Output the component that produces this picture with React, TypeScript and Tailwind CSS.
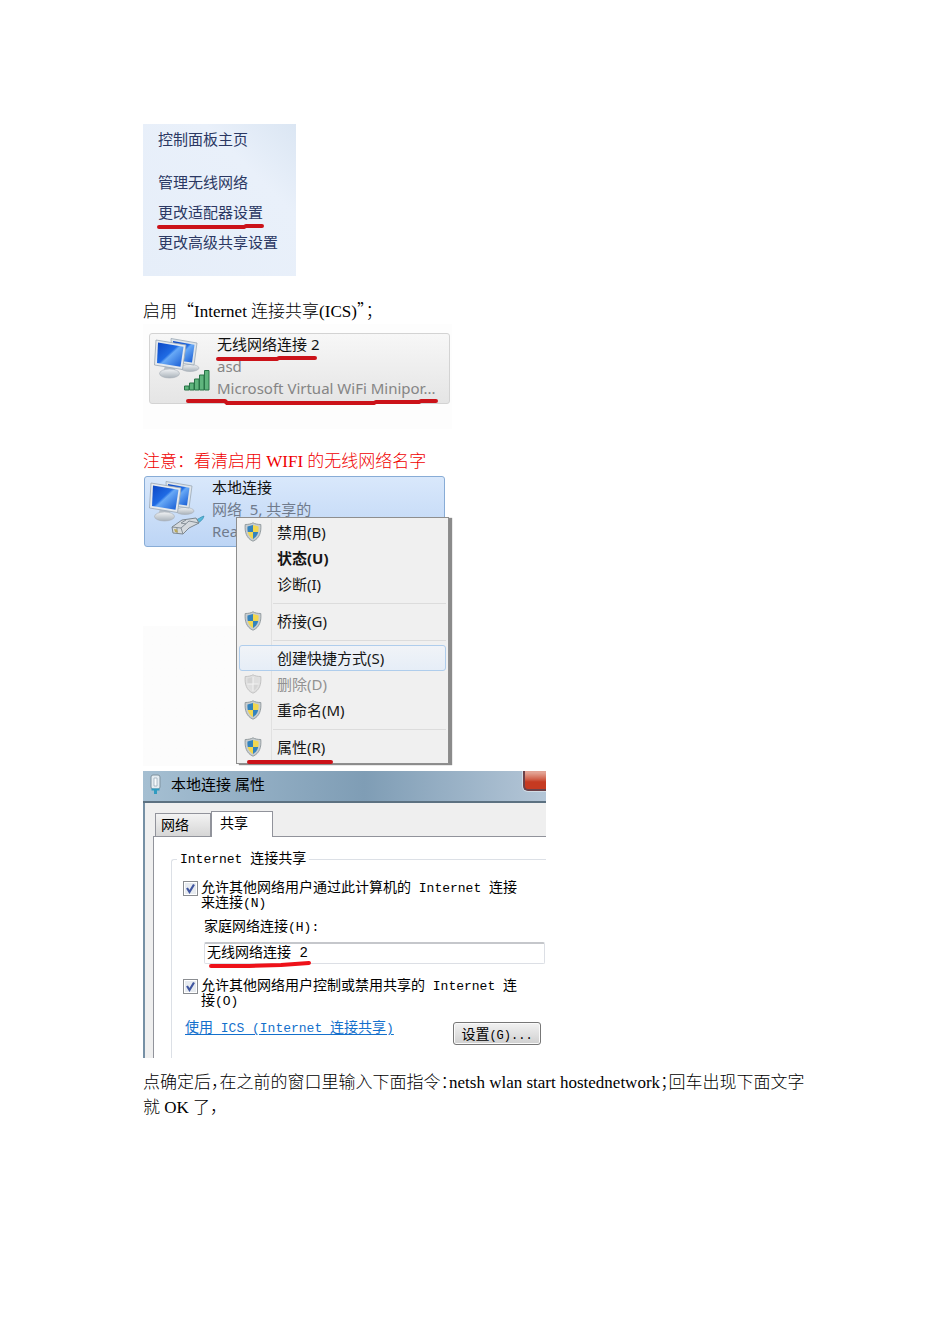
import React, { useId, useState } from "react";

const UI_FONT = "font-['Noto_Sans','Noto_Sans_CJK_SC',sans-serif]";
const SONG_FONT = "font-['Liberation_Mono','Noto_Sans_CJK_SC',monospace]";

function Latin({ children }: { children: React.ReactNode }) {
  return <span className="text-[13px]">{children}</span>;
}

function Cjk({ children }: { children: React.ReactNode }) {
  return <span className="font-['Noto_Sans_CJK_SC',sans-serif]">{children}</span>;
}

function Marker({ points, className, width = 3, color = "#cb1219" }: { points: string; className: string; width?: number; color?: string }) {
  return (
    <svg className={`pointer-events-none absolute overflow-visible ${className}`} width="10" height="10" aria-hidden="true">
      <polyline points={points} fill="none" stroke={color} strokeWidth={width} strokeLinecap="round" strokeLinejoin="round" />
    </svg>
  );
}

function Monitors({ kind }: { kind: "wifi" | "cable" }) {
  const id = useId();
  return (
    <svg width="64" height="68" viewBox="0 0 64 68" className="-ml-[2px] -mt-[2px] shrink-0" aria-hidden="true">
      <defs>
        <linearGradient id={`${id}s`} x1="0" y1="0" x2="1" y2="1">
          <stop offset="0" stopColor="#0c46c4" />
          <stop offset="0.45" stopColor="#1f6be4" />
          <stop offset="0.52" stopColor="#68a9f6" />
          <stop offset="1" stopColor="#1257d2" />
        </linearGradient>
        <linearGradient id={`${id}g`} x1="0" y1="0" x2="0" y2="1">
          <stop offset="0" stopColor="#f1f3f5" />
          <stop offset="1" stopColor="#a9b2ba" />
        </linearGradient>
      </defs>
      <ellipse cx="42" cy="36" rx="9" ry="3.5" fill={`url(#${id}g)`} stroke="#a7afb7" strokeWidth=".6" />
      <path d="M23 6.5 49 11 46 33 24 30Z" fill="#dfe5ea" stroke="#9ba8b5" strokeWidth=".8" strokeLinejoin="round" />
      <path d="M25 9 46.500 12.700 44 30.500 26 28Z" fill={`url(#${id}s)`} />
      <path d="M17 34h9l2 6H15z" fill="#b8c0c8" />
      <ellipse cx="21.500" cy="41.500" rx="10" ry="4.500" fill={`url(#${id}g)`} stroke="#a7afb7" strokeWidth=".6" />
      <path d="M8 8 38 13 34.500 37.500 6.500 33Z" fill="#e6eaee" stroke="#99a6b3" strokeWidth=".8" strokeLinejoin="round" />
      <path d="M10 10.500 35.500 14.800 32.500 34.800 9 31Z" fill={`url(#${id}s)`} />
      {kind === "wifi" ? (
        <g fill="#5fb57d" stroke="#287347" strokeWidth="1">
          <path d="M36.500 54h4.500v4h-4.500zM41.500 51h4.500v7h-4.500zM46.500 47h4.500v11h-4.500zM51.500 43h4.500v15h-4.500zM56.500 38.500h4.500v19.500h-4.500z" />
        </g>
      ) : (
        <g strokeLinejoin="round">
          <path d="M52 45c3 0 5-3 9-4-1 4-4 6-8 8z" fill="#55b9db" stroke="#378cad" strokeWidth=".7" />
          <path d="m29 52 10-7 14-2 3 5-10 5-6 6-10-1z" fill="#d5dade" stroke="#7d878f" />
          <path d="m29 52 9 1 2 6M38 53l8-7 10 2M34 53v5M43 49l-5-1 5-3" fill="none" stroke="#7d878f" strokeWidth=".9" />
          <path d="m31 54 1 3 3 .4-1-3z" fill="#b9a95c" />
        </g>
      )}
    </svg>
  );
}

function Shield({ muted = false }: { muted?: boolean }) {
  const id = useId();
  const blue = muted ? "#d4d4d4" : "#3483bd";
  const gold = muted ? "#dedede" : "#f2d750";
  return (
    <svg width="18" height="20" viewBox="0 0 18 20" aria-hidden="true">
      <clipPath id={id}>
        <path d="M9 3 3.500 4.500C3 10 4.500 14.500 9 17c4.500-2.500 6-7 5.500-12.500z" />
      </clipPath>
      <path d="M9 .8C7 2 4 2.500 1.200 2.500.5 10 2.500 16.500 9 19.200c6.500-2.700 8.500-9.200 7.800-16.700C14 2.500 11 2 9 .8z" fill={muted ? "#e0e0e0" : "#c7cdd0"} stroke={muted ? "#bebebe" : "#8d969a"} strokeWidth=".9" />
      <g clipPath={`url(#${id})`}>
        <path d="M0 0h9v10H0zM9 10h9v10H9z" fill={blue} />
        <path d="M9 0h9v10H9zM0 10h9v10H0z" fill={gold} />
      </g>
      {muted && <path d="M9 3v14M3.500 10h11" stroke="#f3f3f3" />}
    </svg>
  );
}

function SidePanel() {
  return (
    <nav className={`relative h-[152px] w-full max-w-[153px] bg-linear-to-bl from-[#dbe6f3] via-[#e9f0fa] via-30% to-[#e6eef9] pl-[15px] text-[15px] leading-[30px] text-[#2b3863] ${UI_FONT}`}>
      <a href="#home" className="mb-[13px] block whitespace-nowrap">控制面板主页</a>
      <a href="#wireless" className="block whitespace-nowrap">管理无线网络</a>
      <a href="#adapter" className="block whitespace-nowrap">更改适配器设置</a>
      <a href="#sharing" className="block whitespace-nowrap">更改高级共享设置</a>
      <Marker className="left-[15px] top-[98px]" points="1,5 86,5 88,4 104,4" width={4} />
    </nav>
  );
}

function WirelessCard() {
  return (
    <section className={`relative h-[105px] w-full max-w-[309px] bg-[#fdfdfd] px-[6px] pt-[9px] text-[15px] leading-[22px] ${UI_FONT}`}>
      <div className="flex h-[71px] w-[301px] rounded-[3px] border border-[#d3d3d3] bg-linear-to-b from-[#f7f7f7] to-[#e5e5e5]">
        <Monitors kind="wifi" />
        <div className="-mt-[1px] ml-[5px] whitespace-nowrap text-[#858585]">
          <p className="text-[#111]">无线网络连接 2</p>
          <p>asd</p>
          <p>Microsoft Virtual WiFi Minipor...</p>
        </div>
      </div>
      <Marker className="left-[74px] top-[30px]" points="1,5 60,5 62,4 98,4" width={4} />
      <Marker className="left-[44px] top-[74px]" points="1,3 38,3 40,5 187,5 189,4 232,4 234,3 249,3" width={4} />
    </section>
  );
}

type Entry = { label: string; icon?: "on" | "off"; bold?: boolean; active?: boolean };

const groups: Entry[][] = [
  [{ label: "禁用(B)", icon: "on" }, { label: "状态(U)", bold: true }, { label: "诊断(I)" }],
  [{ label: "桥接(G)", icon: "on" }],
  [{ label: "创建快捷方式(S)", active: true }, { label: "删除(D)", icon: "off" }, { label: "重命名(M)", icon: "on" }],
  [{ label: "属性(R)", icon: "on" }],
];

function ContextMenu() {
  return (
    <div className="absolute left-[93px] top-[43px] w-[213px] border border-[#8e8e8e] bg-[#f0f0f0] px-[2px] pb-[3px] pt-[1px] shadow-[3px_1px_1px_#8b8b8b]">
      {groups.map((group, i) => (
        <div key={i} className={i > 0 ? "relative pt-[11px]" : "relative"}>
          <span className="absolute inset-y-0 left-[32px] w-px bg-[#e1e1e1]" />
          {i > 0 && <hr className="absolute left-[34px] right-0 top-[6px] border-[#dcdcdc]" />}
          {group.map((item) => (
            <button
              key={item.label}
              type="button"
              disabled={item.icon === "off"}
              className={`relative flex h-[26px] w-full items-center rounded-[3px] border text-left ${item.active ? "border-[#afcdec] bg-linear-to-b from-[#f1f4f9]/80 to-[#e3edf9]/80" : "border-transparent"} ${item.icon === "off" ? "text-[#929292]" : "text-[#161616]"}`}
            >
              <span className="flex w-[37px] shrink-0 pl-[4px]">{item.icon && <Shield muted={item.icon === "off"} />}</span>
              <span className={`whitespace-nowrap ${item.bold ? "font-bold" : ""}`}>{item.label}</span>
            </button>
          ))}
        </div>
      ))}
    </div>
  );
}

function LocalConnection() {
  return (
    <section className={`relative h-[292px] w-full max-w-[309px] bg-linear-to-b from-white from-52% to-[#fcfcfc] to-52% px-[1px] pt-[2px] text-[15px] leading-[22px] ${UI_FONT}`}>
      <div className="flex h-[71px] w-[301px] rounded-[3px] border border-[#88acd6] bg-linear-to-b from-[#d9e8fb] to-[#bdd5f5]">
        <Monitors kind="cable" />
        <div className="-mt-[1px] ml-[5px] whitespace-nowrap text-[#707b8c]">
          <p className="text-[#111]">本地连接</p>
          <p>网络&nbsp; 5, 共享的</p>
          <p>Rea</p>
        </div>
      </div>
      <ContextMenu />
      <Marker className="left-[105px] top-[283px]" points="1,5 83,5" width={4} />
    </section>
  );
}

function CheckRow({ id, children }: { id: string; children: React.ReactNode }) {
  const [on, setOn] = useState(true);
  return (
    <div className="flex gap-[3px]">
      <span className="relative size-[15px] shrink-0">
        <input id={id} type="checkbox" checked={on} onChange={() => setOn(!on)} className="block size-[15px] appearance-none border border-[#8a8d91] bg-[#e7ebf0] shadow-[inset_0_0_0_1px_#fff]" />
        {on && (
          <svg className="pointer-events-none absolute inset-0" width="15" height="15" aria-hidden="true">
            <path d="m4 7 2.500 4L11 3.500" fill="none" stroke="#4056a0" strokeWidth="2.200" />
          </svg>
        )}
      </span>
      <label htmlFor={id} className="whitespace-nowrap leading-[14px]">{children}</label>
    </div>
  );
}

function PropertiesDialog() {
  return (
    <section className={`relative mt-[5px] flex h-[287px] w-full max-w-[403px] flex-col overflow-hidden text-[14px] text-black ${SONG_FONT}`}>
      <header className={`flex h-[32px] shrink-0 items-start justify-between border-b-2 border-[#5c7181] bg-linear-to-r from-[#a5bfd2] via-[#7f9db5] via-55% to-[#b4c6d7] ${UI_FONT}`}>
        <div className="flex items-center gap-[9px] pl-[6px] pt-[1px]">
          <svg width="13" height="20" viewBox="0 0 13 20" aria-hidden="true">
            <rect x="2" y="1" width="9" height="14" rx="2" fill="#e4ecf1" stroke="#7f929f" />
            <path d="M5 4h3v8H5z" fill="#f9fcfd" stroke="#93a5b2" strokeWidth=".7" />
            <path d="M2.500 14.500h8v2h-8zM5 16.500h3V20H5z" fill="#2f9bc0" />
          </svg>
          <h2 className="text-[15px] leading-[24px]">本地连接 属性</h2>
        </div>
        <button type="button" aria-label="关闭" className="h-[20px] w-[23px] rounded-bl-[5px] border-b-2 border-l-2 border-[#6c4148] bg-linear-to-b from-[#e2a293] from-10% via-[#d0614b] via-45% to-[#c63a21] to-60% shadow-[0_0_0_1px_#d2dde6]" />
      </header>
      <div className="flex grow flex-col border-l-2 border-[#7690a5] bg-[#efefef] pl-[8px] pt-[8px]">
        <div className="flex items-end pl-[2px]">
          <button type="button" className="h-[23px] w-[56px] border border-b-0 border-[#91939b] bg-linear-to-b from-[#f3f3f3] to-[#d6d6d6] pl-[5px] text-left">网络</button>
          <button type="button" className="relative z-10 -mb-px h-[26px] w-[62px] border border-b-0 border-[#91939b] bg-white pl-[8px] text-left">共享</button>
        </div>
        <div className="grow border-l border-t border-[#91939b] bg-white pl-[17px] pt-[14px]">
          <fieldset className="relative h-full">
            <span className="absolute bottom-0 left-0 right-0 top-[8px] rounded-tl-[3px] border-l border-t border-[#dce0e6]" />
            <legend className="relative float-left ml-[6px] bg-white px-[3px] leading-[16px]"><Latin>Internet </Latin>连接共享</legend>
            <div className="relative clear-both pl-[12px] pt-[13px]">
              <CheckRow id="allow-connect">
                允许其他网络用户通过此计算机的<Latin> Internet </Latin>连接<br />来连接<Latin>(N)</Latin>
              </CheckRow>
              <div className="relative pl-[21px] pt-[7px]">
                <label htmlFor="home-network" className="block leading-[18px]">家庭网络连接<Latin>(H):</Latin></label>
                <input id="home-network" defaultValue="无线网络连接 2" className="mt-[5px] block h-[22px] w-[341px] rounded-[2px] border border-t-2 border-[#dcdfe5] border-t-[#c5c7cb] pl-[2px] text-[14px]" />
                <Marker className="left-[26px] top-[48px]" points="2,7 40,7 72,6 86,5 100,4" width={4} color="#ee1119" />
              </div>
              <div className="pt-[15px]">
                <CheckRow id="allow-control">
                  允许其他网络用户控制或禁用共享的<Latin> Internet </Latin>连<br />接<Latin>(O)</Latin>
                </CheckRow>
              </div>
              <div className="flex items-start justify-between pl-[2px] pr-[5px] pt-[11px]">
                <a href="#ics" className="whitespace-nowrap leading-[16px] text-[#1470cc] underline underline-offset-2">使用<Latin> ICS (Internet </Latin>连接共享<Latin>)</Latin></a>
                <button type="button" className="mt-[2px] h-[23px] w-[88px] whitespace-nowrap rounded-[3px] border border-[#777] bg-linear-to-b from-[#f2f2f2] to-[#d0d0d0] shadow-[inset_0_0_0_1px_#fafafa]">设置<span className="text-[12px]">(G)...</span></button>
              </div>
            </div>
          </fieldset>
        </div>
      </div>
    </section>
  );
}

export default function App() {
  return (
    <main className="min-h-screen bg-white pb-[224px] pl-[143px] pr-[136px] pt-[124px] font-['Liberation_Serif','Noto_Sans_CJK_SC',serif] text-[17px] leading-[25px] text-black">
      <SidePanel />
      <p className="mt-[21px] font-light">启用<Cjk>“</Cjk>Internet 连接共享(ICS)<Cjk>”；</Cjk></p>
      <WirelessCard />
      <p className="mt-[20px] font-light text-[#f00000]">注意：看清启用 WIFI 的无线网络名字</p>
      <LocalConnection />
      <PropertiesDialog />
      <p className="mt-[12px] font-light [font-feature-settings:'halt']">点确定后，在之前的窗口里输入下面指令：netsh wlan start hostednetwork；回车出现下面文字就 OK 了，</p>
    </main>
  );
}
